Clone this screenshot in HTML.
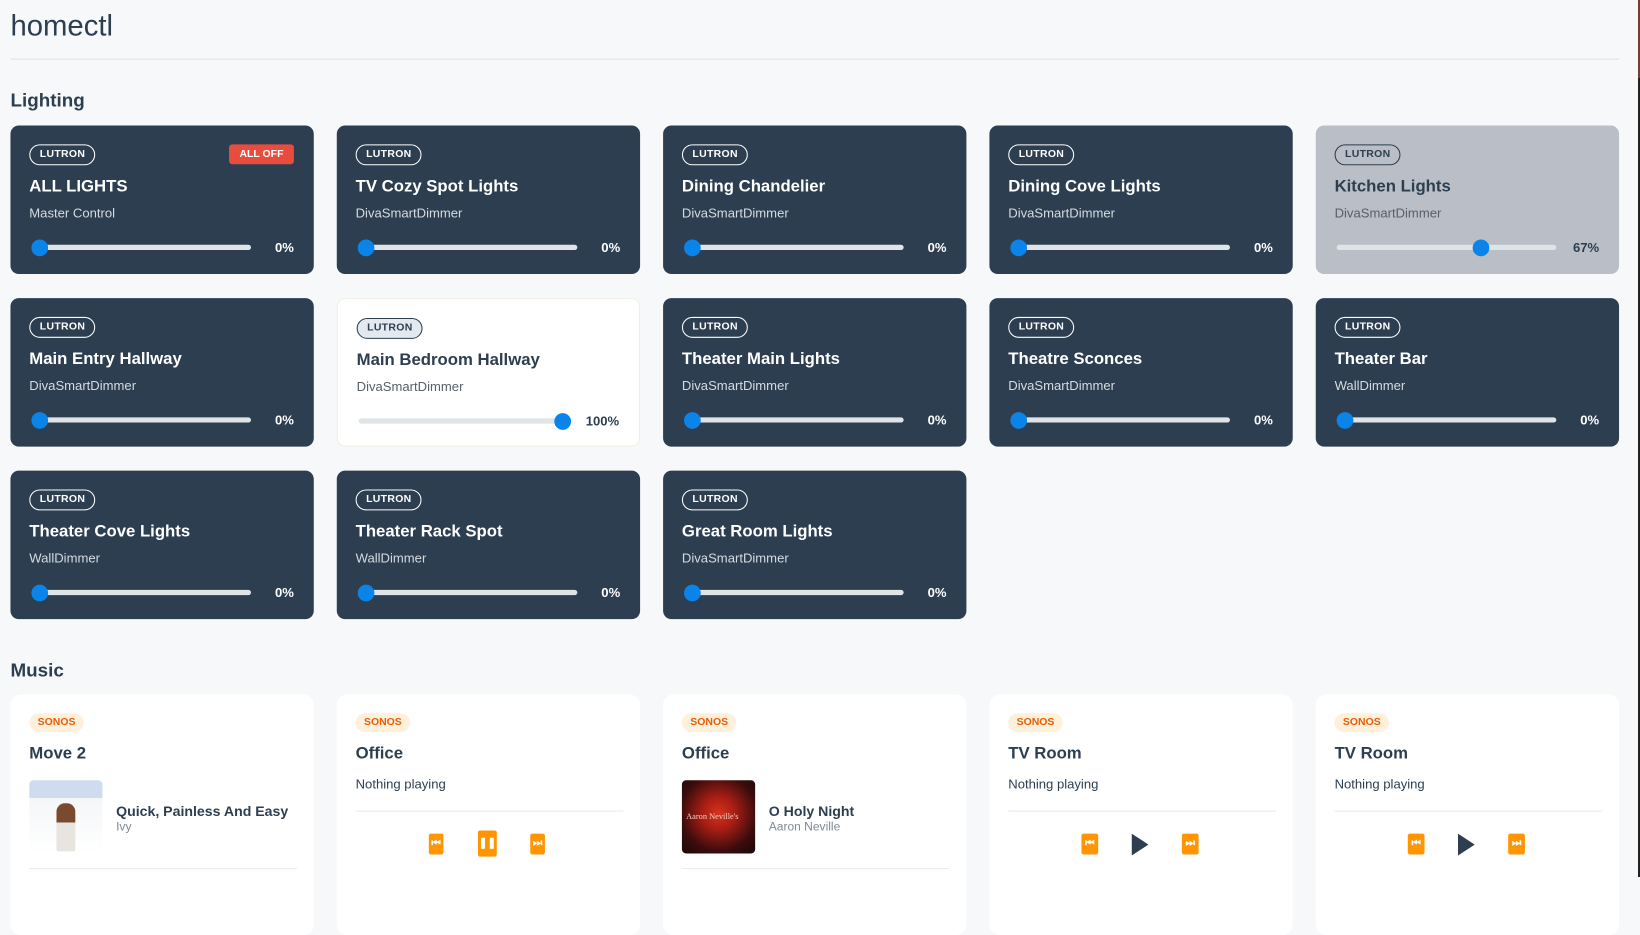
<!DOCTYPE html>
<html><head><meta charset="utf-8"><style>
*{box-sizing:border-box;margin:0;padding:0}
body{width:1640px;height:877px;overflow:hidden;background:#f7f8fa;font-family:"Liberation Sans",sans-serif;color:#2c3e50;position:relative}
#w{position:absolute;left:0;top:0;width:1568px;height:840px;transform:scale(1.0459);transform-origin:0 0}
.h1{position:absolute;left:10px;top:9px;font-size:28px;color:#2c3e50;font-weight:400}
.hr{position:absolute;left:10px;top:56px;width:1538px;height:1px;background:#dde1e5}
.sec{position:absolute;left:10px;font-size:18px;font-weight:700;color:#2c3e50}
.card{position:absolute;width:290px;height:142px;border-radius:8px;background:#2c3e50;color:#fff}
.badge{position:absolute;left:18px;top:18px;height:20px;padding:0 9px;border:1.5px solid #fff;border-radius:10px;font-size:10px;font-weight:700;line-height:17px;letter-spacing:.3px}
.t{position:absolute;left:18px;top:50px;font-size:16px;font-weight:700}
.s{position:absolute;left:18px;top:77px;font-size:12.5px;color:#d5dbe1}
.tr{position:absolute;left:28px;top:114px;width:202px;height:5px;border-radius:3px;background:#dfe4e8}
.th{position:absolute;top:109px;width:16px;height:16px;border-radius:50%;background:#0a84e8}
.p{position:absolute;right:19px;top:110px;font-size:12.5px;font-weight:700}
.off{position:absolute;right:19px;top:18px;width:62px;height:19px;background:#e74c3c;border-radius:3px;font-size:10px;font-weight:700;text-align:center;line-height:19px}
.light{background:#fff;border:1px solid #f0f0e0;color:#2c3e50}
.light .badge{border-color:#2c3e50;background:#e4e9f0;color:#2c3e50}
.light .s{color:#55606b}
.grey{background:#babec6;color:#2c3e50}
.grey .badge{border-color:#2c3e50;color:#2c3e50}
.grey .s{color:#55606b}
.m{position:absolute;top:664px;width:290px;height:230px;background:#fff;border-radius:10px}
.sb{position:absolute;left:18px;top:18px;height:18px;padding:0 8px;background:#fff0dc;color:#e85d04;border-radius:9px;font-size:10px;font-weight:700;line-height:18px}
.mt{position:absolute;left:18px;top:48px;font-size:16px;font-weight:700}
.np{position:absolute;left:18px;top:79px;font-size:12.5px;color:#2c3e50}
.ln{position:absolute;left:18px;width:256px;height:1px;background:#e8ebee}
.ob{position:absolute;width:17px;height:20px;background:#ff9500;border-radius:2px;color:#fff;font-size:10px;text-align:center;line-height:20px;font-weight:700}
.art{position:absolute;left:18px;top:82px;width:70px;height:70px;border-radius:4px;overflow:hidden}
.st{position:absolute;left:101px;top:104px;font-size:13.5px;font-weight:700}
.sa{position:absolute;left:101px;top:121px;font-size:11.5px;color:#7f8a94}
</style></head><body>
<div id="w">
<div class="h1">homectl</div>
<div class="hr"></div>
<div class="sec" style="top:86px">Lighting</div>

<div class="card" style="left:10px;top:120px"><div class="badge">LUTRON</div><div class="off">ALL OFF</div><div class="t">ALL LIGHTS</div><div class="s">Master Control</div><div class="tr"></div><div class="th" style="left:20px"></div><div class="p">0%</div></div>
<div class="card" style="left:322px;top:120px"><div class="badge">LUTRON</div><div class="t">TV Cozy Spot Lights</div><div class="s">DivaSmartDimmer</div><div class="tr"></div><div class="th" style="left:20px"></div><div class="p">0%</div></div>
<div class="card" style="left:634px;top:120px"><div class="badge">LUTRON</div><div class="t">Dining Chandelier</div><div class="s">DivaSmartDimmer</div><div class="tr"></div><div class="th" style="left:20px"></div><div class="p">0%</div></div>
<div class="card" style="left:946px;top:120px"><div class="badge">LUTRON</div><div class="t">Dining Cove Lights</div><div class="s">DivaSmartDimmer</div><div class="tr"></div><div class="th" style="left:20px"></div><div class="p">0%</div></div>
<div class="card grey" style="left:1258px;top:120px"><div class="badge">LUTRON</div><div class="t">Kitchen Lights</div><div class="s">DivaSmartDimmer</div><div class="tr" style="left:20px;width:210px"></div><div class="th" style="left:150px"></div><div class="p">67%</div></div>

<div class="card" style="left:10px;top:285px"><div class="badge">LUTRON</div><div class="t">Main Entry Hallway</div><div class="s">DivaSmartDimmer</div><div class="tr"></div><div class="th" style="left:20px"></div><div class="p">0%</div></div>
<div class="card light" style="left:322px;top:285px"><div class="badge">LUTRON</div><div class="t">Main Bedroom Hallway</div><div class="s">DivaSmartDimmer</div><div class="tr" style="left:20px;width:200px"></div><div class="th" style="left:207px"></div><div class="p">100%</div></div>
<div class="card" style="left:634px;top:285px"><div class="badge">LUTRON</div><div class="t">Theater Main Lights</div><div class="s">DivaSmartDimmer</div><div class="tr"></div><div class="th" style="left:20px"></div><div class="p">0%</div></div>
<div class="card" style="left:946px;top:285px"><div class="badge">LUTRON</div><div class="t">Theatre Sconces</div><div class="s">DivaSmartDimmer</div><div class="tr"></div><div class="th" style="left:20px"></div><div class="p">0%</div></div>
<div class="card" style="left:1258px;top:285px"><div class="badge">LUTRON</div><div class="t">Theater Bar</div><div class="s">WallDimmer</div><div class="tr"></div><div class="th" style="left:20px"></div><div class="p">0%</div></div>

<div class="card" style="left:10px;top:450px"><div class="badge">LUTRON</div><div class="t">Theater Cove Lights</div><div class="s">WallDimmer</div><div class="tr"></div><div class="th" style="left:20px"></div><div class="p">0%</div></div>
<div class="card" style="left:322px;top:450px"><div class="badge">LUTRON</div><div class="t">Theater Rack Spot</div><div class="s">WallDimmer</div><div class="tr"></div><div class="th" style="left:20px"></div><div class="p">0%</div></div>
<div class="card" style="left:634px;top:450px"><div class="badge">LUTRON</div><div class="t">Great Room Lights</div><div class="s">DivaSmartDimmer</div><div class="tr"></div><div class="th" style="left:20px"></div><div class="p">0%</div></div>

<div class="sec" style="top:631px">Music</div>

<div class="m" style="left:10px"><div class="sb">SONOS</div><div class="mt">Move 2</div>
<div class="art" style="background:linear-gradient(#cfdcf0 0,#cfdcf0 24%,#f4f6f8 24%,#fff 100%)"><div style="position:absolute;left:26px;top:22px;width:18px;height:46px;border-radius:8px 8px 2px 2px;background:linear-gradient(#7a4a2e 0,#7a4a2e 40%,#e8e4e0 40%)"></div></div>
<div class="st">Quick, Painless And Easy</div><div class="sa">Ivy</div><div class="ln" style="top:166px"></div></div>

<div class="m" style="left:322px"><div class="sb">SONOS</div><div class="mt">Office</div><div class="np">Nothing playing</div><div class="ln" style="top:111px"></div>
<div class="ob" style="left:88px;top:133px;width:14px">⏮</div><div class="ob" style="left:135px;top:130px;height:25px;width:18px;line-height:25px">❚❚</div><div class="ob" style="left:185px;top:133px;width:14px">⏭</div></div>

<div class="m" style="left:634px"><div class="sb">SONOS</div><div class="mt">Office</div>
<div class="art" style="background:radial-gradient(circle at 50% 45%,#d8321c 0,#a81e14 30%,#3a0c0c 70%,#1a0808 100%)"><div style="position:absolute;left:4px;top:30px;font-family:'Liberation Serif',serif;font-size:8px;color:#f4d0c0">Aaron Neville's</div></div>
<div class="st">O Holy Night</div><div class="sa">Aaron Neville</div><div class="ln" style="top:166px"></div></div>

<div class="m" style="left:946px"><div class="sb">SONOS</div><div class="mt">TV Room</div><div class="np">Nothing playing</div><div class="ln" style="top:111px"></div>
<div class="ob" style="left:88px;top:133px;width:16px">⏮</div><svg style="position:absolute;left:136px;top:133px" width="16" height="21"><path d="M0 0L16 10.5L0 21Z" fill="#2c3e50"/></svg><div class="ob" style="left:184px;top:133px;width:16px">⏭</div></div>

<div class="m" style="left:1258px"><div class="sb">SONOS</div><div class="mt">TV Room</div><div class="np">Nothing playing</div><div class="ln" style="top:111px"></div>
<div class="ob" style="left:88px;top:133px;width:16px">⏮</div><svg style="position:absolute;left:136px;top:133px" width="16" height="21"><path d="M0 0L16 10.5L0 21Z" fill="#2c3e50"/></svg><div class="ob" style="left:184px;top:133px;width:16px">⏭</div></div>
</div>
<div style="position:absolute;left:1638px;top:0;width:2px;height:877px;background:#222"></div>
<div style="position:absolute;left:1638px;top:0;width:2px;height:78px;background:#7a3a36"></div>
</body></html>
